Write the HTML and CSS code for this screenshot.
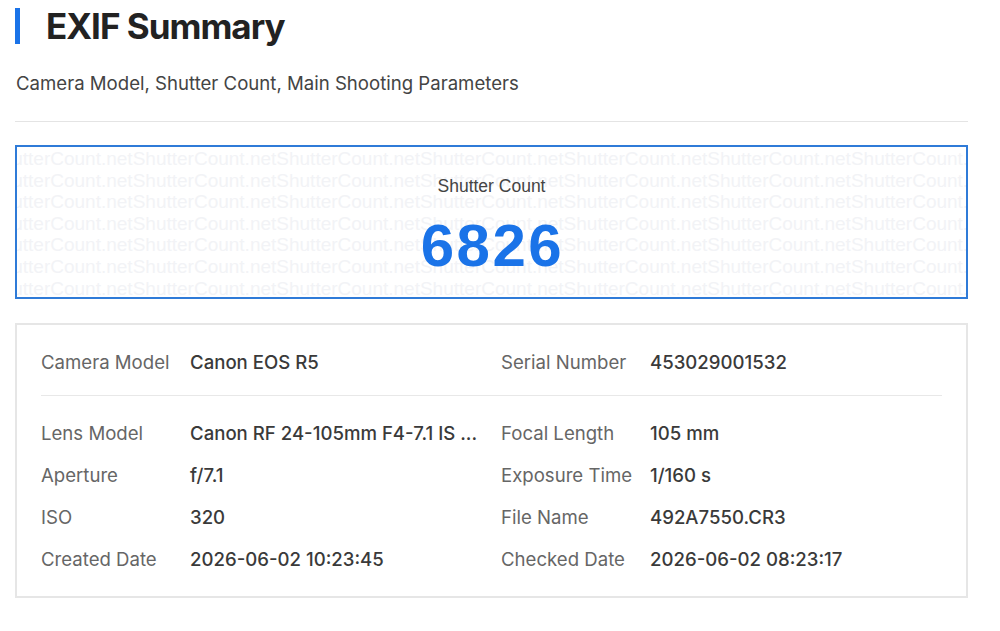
FILE: index.html
```html
<!DOCTYPE html>
<html>
<head>
  <title>EXIF Summary</title>
  <link rel="stylesheet" href="styles.css">
</head>
<body>

  <div class="page">
    <!-- Header -->
    <h1 class="title">EXIF Summary</h1>
    <p class="subtitle">Camera Model, Shutter Count, Main Shooting Parameters</p>
    <hr class="rule">

    <!-- Shutter count -->
    <div class="count-box">
      <div class="watermark" id="watermark"></div>
      <div class="count-label">Shutter Count</div>
      <div class="count-value">6826</div>
    </div>

    <!-- Details -->
    <div class="details">
      <div class="grid top">
        <div class="item"><span class="label">Camera Model</span><span class="value">Canon EOS R5</span></div>
        <div class="item"><span class="label">Serial Number</span><span class="value">453029001532</span></div>
      </div>
      <div class="grid">
        <div class="item"><span class="label">Lens Model</span><span class="value">Canon RF 24-105mm F4-7.1 IS ...</span></div>
        <div class="item"><span class="label">Focal Length</span><span class="value">105 mm</span></div>
        <div class="item"><span class="label">Aperture</span><span class="value">f/7.1</span></div>
        <div class="item"><span class="label">Exposure Time</span><span class="value">1/160 s</span></div>
        <div class="item"><span class="label">ISO</span><span class="value">320</span></div>
        <div class="item"><span class="label">File Name</span><span class="value">492A7550.CR3</span></div>
        <div class="item"><span class="label">Created Date</span><span class="value">2026-06-02 10:23:45</span></div>
        <div class="item"><span class="label">Checked Date</span><span class="value">2026-06-02 08:23:17</span></div>
      </div>
    </div>
  </div>

  <script>
    // fill the watermark with repeated site name
    const wm = document.getElementById('watermark');
    for (let i = 0; i < 7; i++) {
      const line = document.createElement('div');
      line.innerText = 'ShutterCount.net'.repeat(8);
      wm.appendChild(line);
    }
  </script>

</body>
</html>
```

FILE: styles.css
```css
body {
  margin: 0;
  background: #fff;
  font-family: Inter, "Noto Sans", sans-serif;
  color: #333;
}

.page {
  width: 953px;
  margin-left: 15px;
  padding-top: 8px;
}

.title {
  margin: 0;
  height: 36px;
  display: flex;
  align-items: center;
  font-size: 35px;
  font-weight: 700;
  letter-spacing: -1px;
  color: #222;
  border-left: 5px solid #1a73e8;
  padding-left: 26px;
  line-height: 28px;
}

.subtitle {
  margin: 27px 0 0 1px;
  font-size: 18.6px;
  line-height: 25px;
  color: #444;
}

.rule {
  margin: 25px 0 0;
  border: 0;
  border-top: 1px solid #e4e4e4;
}

.count-box {
  position: relative;
  margin-top: 23px;
  height: 150px;
  border: 2px solid #2f7bd8;
  overflow: hidden;
  text-align: center;
  font-family: "Liberation Sans", Arial, sans-serif;
}

.watermark {
  position: absolute;
  top: 1px;
  left: -28px;
  font-size: 19px;
  line-height: 21.6px;
  color: #f2f3f6;
  white-space: nowrap;
  text-align: left;
}

.count-label {
  position: relative;
  margin-top: 29px;
  font-size: 17.5px;
  line-height: 20px;
  color: #444;
}

.count-value {
  position: relative;
  margin-top: 18px;
  padding-left: 2px;
  font-size: 60px;
  font-weight: bold;
  line-height: 64px;
  color: #1a73e8;
  letter-spacing: 2.5px;
}

.details {
  margin-top: 24px;
  border: 2px solid #e6e6e6;
  padding: 16px 24px;
}

.grid {
  display: grid;
  grid-template-columns: 440px 440px;
  column-gap: 20px;
}

.grid.top {
  padding-bottom: 12px;
  border-bottom: 1px solid #e8e8e8;
  margin-bottom: 16px;
}

.item {
  display: flex;
  height: 42px;
  align-items: center;
  font-size: 18.6px;
}

.label {
  width: 149px;
  flex-shrink: 0;
  color: #666;
}

.value {
  color: #3a3a3a;
  font-weight: 500;
}
```
